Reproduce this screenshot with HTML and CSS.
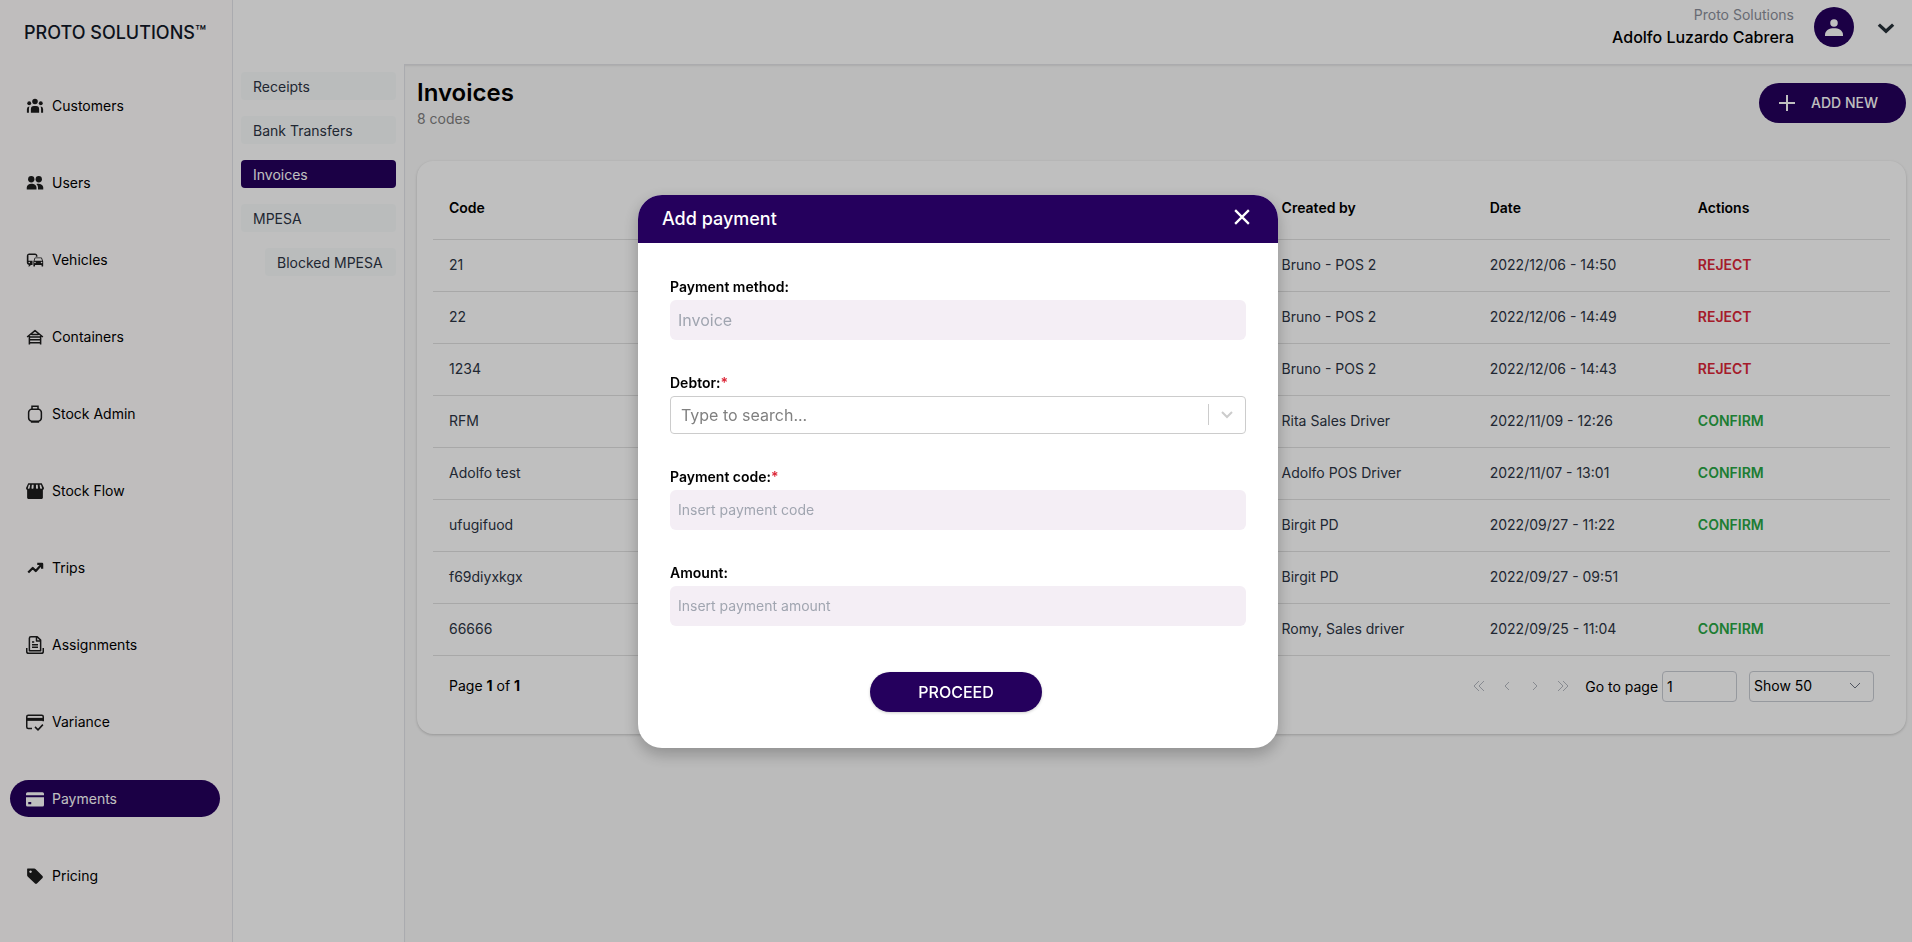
FILE: index.html
```html
<!DOCTYPE html>
<html lang="en">
<head>
<meta charset="utf-8">
<title>Invoices</title>
<link rel="stylesheet" href="styles.css">
</head>
<body>
<div class="app">
  <aside class="sidebar">
    <div class="brand">PROTO SOLUTIONS™</div>
    <nav class="menu">
      <a class="menu-item" href="#"><svg class="icon" viewBox="0 0 24 24"><circle cx="12" cy="6" r="3.700"/><circle cx="4.300" cy="8.300" r="2.600"/><circle cx="19.700" cy="8.300" r="2.600"/><path d="M6.500 21v-5a4 4 0 0 1 4-4h3a4 4 0 0 1 4 4v5zM1.200 21v-5a3.500 3.500 0 0 1 3.500-3.200c-.6 1-.8 2-.8 3.200v5zM22.800 21v-5a3.500 3.500 0 0 0-3.500-3.200c.6 1 .8 2 .8 3.200v5z"/></svg>Customers</a>
      <a class="menu-item" href="#"><svg class="icon" viewBox="0 0 24 24"><circle cx="7" cy="7" r="4.200"/><circle cx="17" cy="7" r="4.200"/><path d="M1 20.500V18c0-3.200 3-5 6.300-5s6.700 1.800 6.700 5v2.500zM16 20.500V18c0-1.900-.9-3.700-2.200-4.800 4-.8 9.200.9 9.200 4.800v2.500z"/></svg>Users</a>
      <a class="menu-item" href="#"><svg class="icon large" viewBox="1 2 22 20"><path d="M12 4H5C3.340 4 2 5.340 2 7v8c0 1.660 1.340 3 3 3l-1 1v1h1l2-2.030L9 18v-5H4V5.980L13 6v2h2V7c0-1.660-1.340-3-3-3zM5 14c.55 0 1 .45 1 1s-.45 1-1 1-1-.45-1-1 .45-1 1-1zm15.570-4.340c-.14-.4-.52-.66-.97-.66h-7.190c-.46 0-.83.26-.98.660L10 13.770l.010 5.510c0 .38.31.72.69.72h.62c.38 0 .68-.38.68-.76V18h8v1.240c0 .38.310.76.690.76h.61c.38 0 .69-.34.69-.72L22 13.770l-1.430-4.110zm-8.160.340h7.190l1.030 3h-9.250l1.030-3zM12 16c-.55 0-1-.45-1-1s.45-1 1-1 1 .45 1 1-.45 1-1 1zm8 0c-.55 0-1-.45-1-1s.45-1 1-1 1 .45 1 1-.45 1-1 1z"/></svg>Vehicles</a>
      <a class="menu-item" href="#"><svg class="icon line" viewBox="0 0 24 24"><path d="M1.500 12 12 3.500 22.500 12M4.500 10.500V22M19.500 10.500V22M7.500 8.700h9M3.500 12h17M4.500 15.800h15M4.500 19.600h15"/></svg>Containers</a>
      <a class="menu-item" href="#"><svg class="icon line" viewBox="0 0 24 24"><path d="M7 1.500h10M8 1.500V5M16 1.500V5M7 5.500h10c2 .8 3.500 2.500 3.500 4.500v7c0 2-1.500 3.800-3.500 4.500H7c-2-.7-3.500-2.500-3.500-4.500v-7c0-2 1.500-3.700 3.500-4.500zM6.500 22.500h11"/></svg>Stock Admin</a>
      <a class="menu-item" href="#"><svg class="icon" viewBox="0 0 24 24"><path fill-rule="evenodd" d="M3 1.500h18l3 6.500c0 1.200-.5 2-1.500 2.600V21q0 1.500-1.500 1.500H3Q1.500 22.500 1.500 21V10.600C.5 10 0 9.200 0 8zM3.800 3.500 2.300 8.200q1.200 1.600 2.500 0l.8-4.700zm4 0-.5 4.700q1.200 1.600 2.700 0l.2-4.700zm5.500 0v4.700q1.400 1.600 2.700 0l-.4-4.700zm4.800 0 .7 4.700q1.400 1.600 2.700 0L20 3.500z"/></svg>Stock Flow</a>
      <a class="menu-item" href="#"><svg class="icon line thick" viewBox="0 0 24 24"><path d="m3 18 6-6 4 4 8-9M15 6.500h6.500V13"/></svg>Trips</a>
      <a class="menu-item" href="#"><svg class="icon line" viewBox="0 0 24 24"><path d="M4.500 19.500V3q0-2 2-2H15l4.500 4.500v14zM14 1v5.500h5M8 8h3M8 11.500h8M8 15h8M1 16v4.500q0 2.500 2.500 2.500h17q2.500 0 2.500-2.500V16"/></svg>Assignments</a>
      <a class="menu-item" href="#"><svg class="icon line" viewBox="0 0 24 24"><path d="M8 20.500H3q-2 0-2-2V5q0-2 2-2h18q2 0 2 2v6M12 18.500l4 4 6.500-7"/><path class="solid" d="M1 6.500h22v4H1z"/></svg>Variance</a>
      <a class="menu-item active" href="#"><svg class="icon" viewBox="0 0 24 24"><path fill-rule="evenodd" d="M0 7V5q0-2 2-2h20q2 0 2 2v2zM0 9.500h24V20q0 2-2 2H2q-2 0-2-2zM3 16v3h4v-3z"/></svg>Payments</a>
      <a class="menu-item" href="#"><svg class="icon" viewBox="0 0 24 24"><path fill-rule="evenodd" d="M2 2h9q1 0 2 1l9 9q1.200 1.300 0 2.600L14.600 22q-1.300 1.200-2.600 0l-9.500-9Q1.500 12 1.500 11V2.500zM6 4.500a1.700 1.700 0 1 0 .1 0z"/></svg>Pricing</a>
    </nav>
  </aside>
  <div class="workspace">
    <header class="topbar">
      <div class="account">
        <span class="company">Proto Solutions</span>
        <span class="user-name">Adolfo Luzardo Cabrera</span>
      </div>
      <span class="avatar"><svg viewBox="0 0 24 24"><circle cx="12" cy="6.500" r="5"/><path d="M0 24v-1.500C0 16 6 13.500 12 13.500S24 16 24 22.500V24z"/></svg></span>
      <button class="account-toggle" aria-label="Account menu"><svg viewBox="0 0 16 10"><path d="m1.500 1.500 6.500 6 6.500-6"/></svg></button>
    </header>
    <div class="columns">
      <nav class="submenu">
        <a class="submenu-item" href="#">Receipts</a>
        <a class="submenu-item" href="#">Bank Transfers</a>
        <a class="submenu-item active" href="#">Invoices</a>
        <a class="submenu-item" href="#">MPESA</a>
        <a class="submenu-item nested" href="#">Blocked MPESA</a>
      </nav>
      <main class="content">
        <div class="page-head">
          <div>
            <h1 class="page-title">Invoices</h1>
            <p class="page-count">8 codes</p>
          </div>
          <button class="add-new"><svg viewBox="0 0 16 16"><path d="M8 0v16M0 8h16"/></svg>ADD NEW</button>
        </div>
        <section class="card">
          <table class="grid">
            <thead><tr><th>Code</th><th></th><th></th><th></th><th>Created by</th><th>Date</th><th>Actions</th></tr></thead>
            <tbody>
              <tr><td>21</td><td></td><td></td><td></td><td>Bruno - POS 2</td><td>2022/12/06 - 14:50</td><td><button class="action reject">REJECT</button></td></tr>
              <tr><td>22</td><td></td><td></td><td></td><td>Bruno - POS 2</td><td>2022/12/06 - 14:49</td><td><button class="action reject">REJECT</button></td></tr>
              <tr><td>1234</td><td></td><td></td><td></td><td>Bruno - POS 2</td><td>2022/12/06 - 14:43</td><td><button class="action reject">REJECT</button></td></tr>
              <tr><td>RFM</td><td></td><td></td><td></td><td>Rita Sales Driver</td><td>2022/11/09 - 12:26</td><td><button class="action confirm">CONFIRM</button></td></tr>
              <tr><td>Adolfo test</td><td></td><td></td><td></td><td>Adolfo POS Driver</td><td>2022/11/07 - 13:01</td><td><button class="action confirm">CONFIRM</button></td></tr>
              <tr><td>ufugifuod</td><td></td><td></td><td></td><td>Birgit PD</td><td>2022/09/27 - 11:22</td><td><button class="action confirm">CONFIRM</button></td></tr>
              <tr><td>f69diyxkgx</td><td></td><td></td><td></td><td>Birgit PD</td><td>2022/09/27 - 09:51</td><td></td></tr>
              <tr><td>66666</td><td></td><td></td><td></td><td>Romy, Sales driver</td><td>2022/09/25 - 11:04</td><td><button class="action confirm">CONFIRM</button></td></tr>
            </tbody>
          </table>
          <div class="pager">
            <span>Page <b>1</b> of <b>1</b></span>
            <div class="pager-controls">
              <div class="pager-arrows">
                <button aria-label="First page"><svg viewBox="0 0 12 12"><path d="M6 1 1 6l5 5M11 1 6 6l5 5"/></svg></button>
                <button aria-label="Previous page"><svg viewBox="0 0 12 12"><path d="M8 2 4 6l4 4"/></svg></button>
                <button aria-label="Next page"><svg viewBox="0 0 12 12"><path d="m4 2 4 4-4 4"/></svg></button>
                <button aria-label="Last page"><svg viewBox="0 0 12 12"><path d="m1 1 5 5-5 5M6 1l5 5-5 5"/></svg></button>
              </div>
              <label class="goto">Go to page <input type="text" value="1"></label>
              <div class="page-size">
                <select aria-label="Rows per page"><option>Show 50</option></select>
                <svg viewBox="0 0 12 12"><path d="m1 3 5 5 5-5"/></svg>
              </div>
            </div>
          </div>
        </section>
      </main>
    </div>
  </div>
</div>

<div class="overlay">
  <form class="modal" role="dialog" aria-labelledby="modal-title">
    <div class="modal-head">
      <h2 id="modal-title">Add payment</h2>
      <button type="button" class="close" aria-label="Close"><svg viewBox="0 0 14 14"><path d="m1 1 12 12M13 1 1 13"/></svg></button>
    </div>
    <div class="modal-body">
      <div class="field">
        <label for="method">Payment method:</label>
        <input class="text-input large" id="method" type="text" placeholder="Invoice" disabled>
      </div>
      <div class="field">
        <label for="debtor">Debtor:<span class="required">*</span></label>
        <div class="combo">
          <input id="debtor" type="text" role="combobox" aria-expanded="false" placeholder="Type to search...">
          <button type="button" aria-label="Open list"><svg viewBox="0 0 12 12"><path d="m1 3 5 5 5-5"/></svg></button>
        </div>
      </div>
      <div class="field">
        <label for="code">Payment code:<span class="required">*</span></label>
        <input class="text-input" id="code" type="text" placeholder="Insert payment code">
      </div>
      <div class="field">
        <label for="amount">Amount:</label>
        <input class="text-input" id="amount" type="text" placeholder="Insert payment amount">
      </div>
      <button type="submit" class="proceed">PROCEED</button>
    </div>
  </form>
</div>
</body>
</html>
```

FILE: styles.css
```css
* { box-sizing: border-box; margin: 0; }

body {
  font-family: Inter, "Open Sans", sans-serif;
  font-size: 14px;
  line-height: 20px;
  color: #000;
}

a { color: inherit; text-decoration: none; }
button, input, select { font: inherit; color: inherit; }
button { border: 0; padding: 0; background: none; }
svg { display: block; fill: none; }

.app { display: flex; min-height: 100vh; }

/* Sidebar */
.sidebar {
  flex: 0 0 233px;
  background: #fffcfd;
  border-right: 1px solid #e3e5ea;
}
.brand { padding: 21px 24px 0; font-size: 18px; line-height: 24px; font-weight: 500; color: #111827; }
.menu { display: flex; flex-direction: column; gap: 40px; padding: 42px 12px 0 10px; }
.menu-item {
  display: flex;
  align-items: center;
  gap: 8px;
  height: 37px;
  padding: 0 16px;
  border-radius: 20px;
}
.menu-item.active { background: #25005d; color: #fff; }
.icon { width: 18px; height: 18px; fill: #1c1c1c; }
.active .icon { fill: #fff; }
.icon.line { fill: none; stroke: #1c1c1c; stroke-width: 2; stroke-linejoin: round; }
.icon.thick { stroke-width: 3; }
.icon .solid { fill: #1c1c1c; stroke: none; }

/* Top bar */
.workspace { flex: 1; display: flex; flex-direction: column; min-width: 0; }
.topbar {
  display: flex;
  justify-content: flex-end;
  height: 64px;
  padding: 4px 17px 0 0;
  background: #fff;
}
.account { display: flex; flex-direction: column; align-items: flex-end; margin-right: 20px; }
.company { line-height: 22px; color: #8b8f9a; }
.user-name { font-size: 16px; line-height: 22px; font-weight: 500; }
.avatar {
  display: flex;
  align-items: center;
  justify-content: center;
  width: 40px;
  height: 40px;
  margin-top: 3px;
  border-radius: 50%;
  background: #25005d;
}
.avatar svg { width: 18px; height: 18px; fill: #fff; }
.account-toggle { align-self: flex-start; margin: 19px 0 0 23px; }
.account-toggle svg { width: 18px; height: 11px; stroke: #263038; stroke-width: 3; }

/* Section menu */
.columns { flex: 1; display: flex; }
.submenu {
  flex: 0 0 172px;
  display: flex;
  flex-direction: column;
  gap: 16px;
  padding: 8px;
  background: #fff;
  border-right: 1px solid #e3e5ea;
}
.submenu-item {
  padding: 5px 12px 3px;
  border-radius: 4px;
  background: #f9fbfb;
  color: #2c3444;
}
.submenu-item.nested { margin-left: 24px; white-space: nowrap; }
.submenu-item.active { background: #25005d; color: #fff; }

/* Page */
.content {
  flex: 1;
  min-width: 0;
  padding: 16px 6px 16px 12px;
  background: #fafafa;
  border-top: 1px solid #e5e5e8;
  box-shadow: inset 0 2px 2px -1px #e4e4e4;
}
.page-head { display: flex; justify-content: space-between; align-items: flex-start; margin-bottom: 32px; }
.page-title { font-size: 24px; line-height: 24px; font-weight: 600; }
.page-count { margin-top: 4px; line-height: 20px; color: #808080; }
.add-new {
  display: flex;
  align-items: center;
  gap: 16px;
  height: 40px;
  margin-top: 2px;
  padding: 0 28px 0 20px;
  border-radius: 20px;
  background: #25005d;
  color: #fff;
  font-weight: 500;
}
.add-new svg { width: 16px; height: 16px; stroke: #fff; stroke-width: 2; }

.card {
  padding: 16px 16px 32px;
  border-radius: 16px;
  background: #fff;
  box-shadow: 0 1px 3px rgba(0, 0, 0, 0.2);
}
.grid { width: 100%; table-layout: fixed; border-collapse: collapse; }
.grid th, .grid td { padding: 0 16px; text-align: left; border-bottom: 1px solid #e0e0e0; }
.grid th { height: 62px; font-weight: 600; }
.grid td { height: 52px; color: #2c3444; }
.grid .action { font-weight: 600; }
.grid .reject { color: #dc2637; }
.grid .confirm { color: #28a745; }

.pager { display: flex; align-items: center; justify-content: space-between; padding: 15px 16px 0; }
.pager-controls { display: flex; align-items: center; gap: 12px; }
.pager-arrows { display: flex; gap: 16px; margin-right: 4px; }
.pager-arrows svg { width: 12px; height: 12px; stroke: #b4b8c0; stroke-width: 1; }
.goto input {
  width: 75px;
  height: 31px;
  padding: 0 4px;
  border: 1px solid #c9ccd3;
  border-radius: 4px;
  background: #fff;
}
.page-size { display: grid; align-items: center; }
.page-size select, .page-size svg { grid-area: 1 / 1; }
.page-size select {
  appearance: none;
  width: 125px;
  height: 31px;
  padding: 0 4px;
  border: 1px solid #c9ccd3;
  border-radius: 4px;
  background: #fff;
}
.page-size svg { justify-self: end; width: 12px; height: 12px; margin-right: 13px; stroke: #6b7280; stroke-width: 1; pointer-events: none; }

/* Dialog */
.overlay {
  position: fixed;
  inset: 0;
  display: flex;
  align-items: center;
  justify-content: center;
  padding-left: 4px;
  background: rgba(0, 0, 0, 0.25);
}
.modal {
  width: 640px;
  border-radius: 24px;
  overflow: hidden;
  background: #fff;
  box-shadow: 0 6px 16px rgba(0, 0, 0, 0.25);
}
.modal-head {
  display: flex;
  align-items: center;
  justify-content: space-between;
  height: 48px;
  padding: 0 28px 0 24px;
  background: #25005d;
  color: #fff;
}
.modal-head h2 { font-size: 18px; line-height: 24px; font-weight: 500; }
.close { margin-bottom: 4px; }
.close svg { width: 16px; height: 16px; stroke: #fff; stroke-width: 2; }
.modal-body { display: flex; flex-direction: column; gap: 32px; padding: 33px 32px 36px; }
.field { display: flex; flex-direction: column; gap: 2px; }
.field label { line-height: 22px; font-weight: 600; }
.required { color: #dc2637; }
.text-input {
  height: 40px;
  padding: 0 8px;
  border: 0;
  border-radius: 6px;
  background: #f4eef5;
}
.text-input.large { font-size: 16px; }
.text-input::placeholder { color: #a0a5b0; }
.combo {
  display: flex;
  align-items: center;
  height: 38px;
  border: 1px solid #ccc;
  border-radius: 4px;
}
.combo input { flex: 1; min-width: 0; padding: 0 10px; border: 0; background: none; font-size: 16px; }
.combo input::placeholder { color: #808080; }
.combo button { height: 21px; padding: 0 12px; border-left: 1px solid #ccc; }
.combo svg { width: 12px; height: 12px; stroke: #ccc; stroke-width: 2; }
.proceed {
  align-self: center;
  width: 172px;
  height: 40px;
  margin: 14px 4px 0 0;
  border-radius: 20px;
  background: #25005d;
  color: #fff;
  font-size: 16px;
  font-weight: 500;
  box-shadow: 0 1px 3px rgba(0, 0, 0, 0.2);
}
```
